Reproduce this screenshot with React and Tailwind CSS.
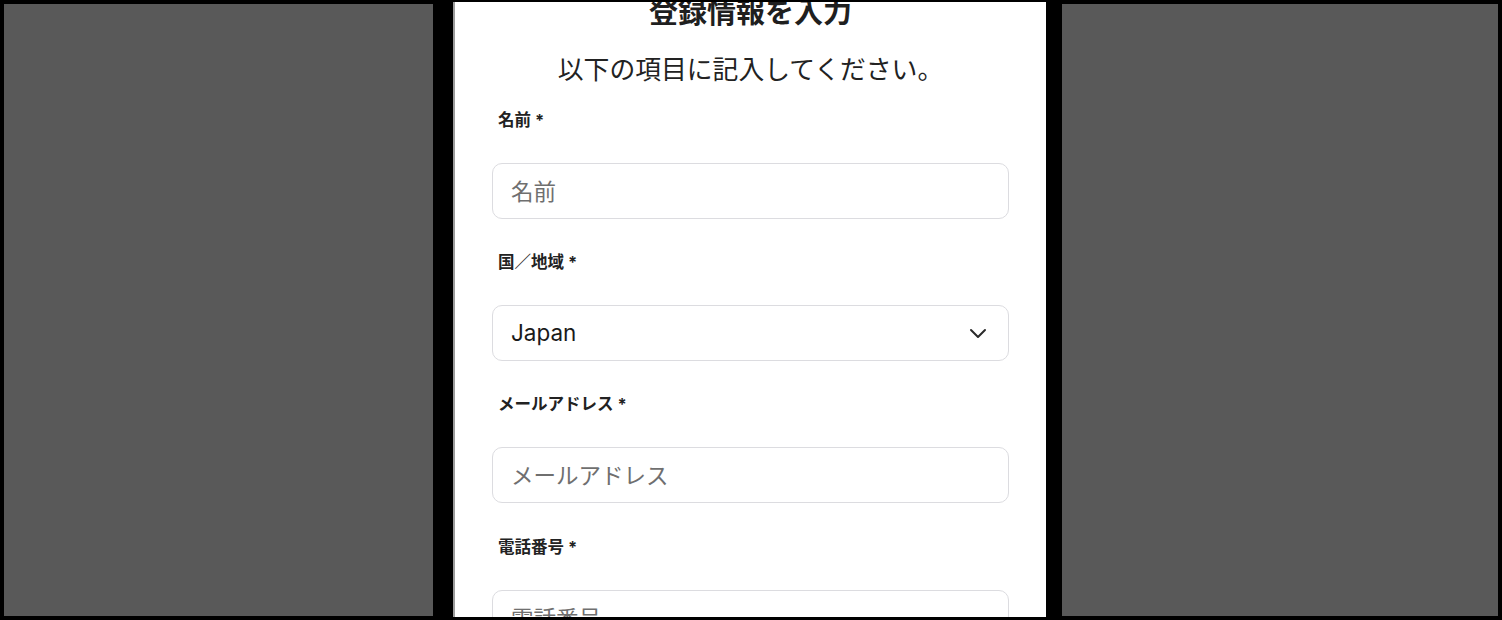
import React from "react";

const font = { fontFamily: '"Inter", "Noto Sans CJK JP", sans-serif' };

function Label({ children }) {
  return (
    <div className="h-[24px] leading-[24px] text-[16.5px] font-bold text-[#222222] pl-[6px]">
      {children} <span>*</span>
    </div>
  );
}

function TextField({ placeholder }) {
  return (
    <input
      type="text"
      placeholder={placeholder}
      className="mt-[31px] block h-[56px] w-full rounded-[10px] border-[1.5px] border-[#dcdce0] bg-white px-[18px] text-[22.5px] text-[#1a1a1a] placeholder:text-[#6f6f6f] outline-none"
      style={font}
    />
  );
}

export default function App() {
  return (
    <div className="flex h-[620px] w-[1502px] items-start overflow-hidden bg-black" style={font}>
      <div className="ml-[4px] mt-[4px] h-[612px] w-[429px] shrink-0 bg-[#595959]" />
      <div className="ml-[20px] mt-[2px] h-[615px] w-[593px] shrink-0 overflow-hidden border-l-2 border-[#9c9c9c] bg-white">
        <div className="px-[37px]">
          <h1 className="-mt-[7px] text-center text-[29px] font-bold leading-[36px] text-[#1f1f1f]">
            登録情報を入力
          </h1>
          <p className="mt-[21px] text-center text-[25.8px] leading-[36px] text-[#222222]">
            以下の項目に記入してください。
          </p>

          <div className="mt-[20px]">
            <Label>名前</Label>
            <TextField placeholder="名前" />
          </div>

          <div className="mt-[31px]">
            <Label>国／地域</Label>
            <div className="mt-[31px] flex h-[56px] w-full items-center justify-between rounded-[10px] border-[1.5px] border-[#dcdce0] bg-white pl-[18px] pr-[21px]">
              <span className="text-[22.5px] text-[#1a1a1a]">Japan</span>
              <svg width="18" height="12" viewBox="0 0 18 12" fill="none">
                <path d="M2 3 L9 10 L16 3" stroke="#2a2a2a" strokeWidth="2" strokeLinecap="round" strokeLinejoin="round" />
              </svg>
            </div>
          </div>

          <div className="mt-[31px]">
            <Label>メールアドレス</Label>
            <TextField placeholder="メールアドレス" />
          </div>

          <div className="mt-[32px]">
            <Label>電話番号</Label>
            <TextField placeholder="電話番号" />
          </div>
        </div>
      </div>
      <div className="ml-[16px] mt-[4px] h-[612px] w-[436px] shrink-0 bg-[#595959]" />
    </div>
  );
}
